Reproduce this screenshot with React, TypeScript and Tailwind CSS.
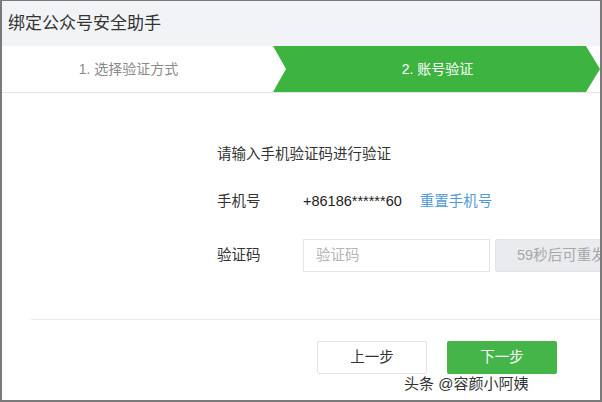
export default function App() {
  return (
    <div
      className="w-[602px] h-[402px] overflow-hidden bg-white border-t border-l-2 border-r-2 border-b-2 border-[#7a7a7a] relative"
      style={{ fontFamily: '"Liberation Sans", "Noto Sans CJK SC", sans-serif' }}
    >
      {/* title bar */}
      <div className="h-[45px] bg-[#f2f3f7] flex items-center pl-[6px] text-[17px] text-[#333]">
        绑定公众号安全助手
      </div>

      {/* steps */}
      <div className="h-[47px] flex border-b border-[#e6e6e6] bg-white">
        <div className="w-[271px] flex items-center justify-center pr-[18px] text-[14px] text-[#8a8a8a]">
          1. 选择验证方式
        </div>
        <div className="flex-1 flex items-center justify-center pl-[2px] text-[14px] text-white bg-[#3db43f] [clip-path:polygon(0_0,calc(100%-14px)_0,100%_50%,calc(100%-14px)_100%,0_100%,13px_50%)]">
          2. 账号验证
        </div>
      </div>

      {/* form */}
      <div className="pl-[215px] pt-[51px] text-[14.5px] text-[#333]">
        <div className="h-[22px] flex items-center">请输入手机验证码进行验证</div>

        <div className="mt-[25px] h-[22px] flex items-center whitespace-nowrap">
          <span className="w-[86px] shrink-0">手机号</span>
          <span className="text-[14.5px] text-[#222]">+86186******60</span>
          <span className="ml-[18px] text-[#4f9bd6]">重置手机号</span>
        </div>

        <div className="mt-[26px] flex items-center gap-[5px]">
          <span className="w-[81px] shrink-0">验证码</span>
          <div className="w-[187px] h-[33px] shrink-0 border border-[#e3e3e3] flex items-center pl-[12px] text-[#b5b5b5]">
            验证码
          </div>
          <div className="w-[130px] h-[33px] shrink-0 bg-[#eaebee] border border-[#e2e3e6] rounded-[2px] flex items-center pl-[21px] text-[#a8a8a8] whitespace-nowrap">
            59秒后可重发
          </div>
        </div>
      </div>

      {/* footer */}
      <div className="ml-[29px] mt-[47px] border-t border-[#ebebeb]" />
      <div className="flex justify-end gap-[20px] pr-[43px] pt-[21px] text-[14.5px]">
        <button className="w-[110px] h-[33px] bg-white border border-[#e2e2e2] rounded-[2px] text-[#333]">
          上一步
        </button>
        <button className="w-[110px] h-[33px] bg-[#44b549] rounded-[2px] text-white">
          下一步
        </button>
      </div>

      {/* watermark */}
      <div className="absolute left-[402px] top-[372px] text-[15px] text-[#333] [text-shadow:0_0_2px_#fff,0_0_2px_#fff]">
        头条 @容颜小阿姨
      </div>
    </div>
  )
}
